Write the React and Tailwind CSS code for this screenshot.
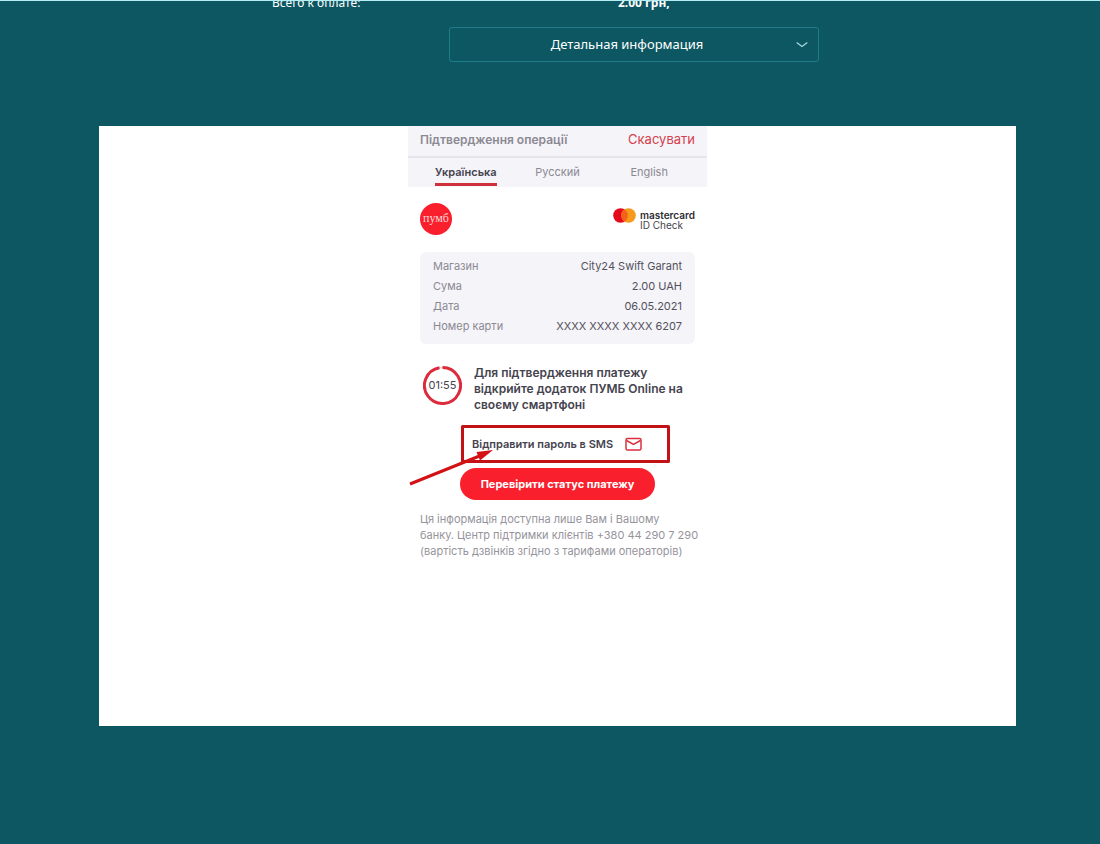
import { useState } from 'react'
import clsx from 'clsx'

const languages = [
  { id: 'uk', label: 'Українська' },
  { id: 'ru', label: 'Русский' },
  { id: 'en', label: 'English' },
]

const details = [
  { label: 'Магазин', value: 'City24 Swift Garant' },
  { label: 'Сума', value: '2.00 UAH' },
  { label: 'Дата', value: '06.05.2021' },
  { label: 'Номер карти', value: 'XXXX XXXX XXXX 6207' },
]

function OrderSummary() {
  return (
    <header className="mr-[281px] ml-[272px] overflow-hidden text-white">
      <div className="-mt-[7px] flex h-[18px] items-center justify-between text-xs leading-[18px]">
        <span className="whitespace-nowrap">Всего к оплате:</span>
        <strong className="w-[201px] whitespace-nowrap">2.00 грн,</strong>
      </div>
      <button
        type="button"
        className="mt-[15px] ml-auto flex h-[35px] w-[370px] items-center rounded-[3px] border border-[#1f7d8a] pr-[10px] pl-2 text-[13px]"
      >
        <span className="flex-1 text-center">Детальная информация</span>
        <svg className="h-3 w-3" viewBox="0 0 12 12" fill="none" stroke="#a9dbe2" strokeWidth="1.2">
          <path d="M0.7 3.500 6 7.500l5.300-4" />
        </svg>
      </button>
    </header>
  )
}

function LanguageTabs() {
  const [active, setActive] = useState('uk')

  return (
    <nav className="grid h-[29px] grid-cols-3 justify-items-center bg-[#f5f4f9] px-3 text-[11px]">
      {languages.map(({ id, label }) => (
        <button
          key={id}
          type="button"
          onClick={() => setActive(id)}
          className={clsx(
            'h-7 border-b-[3px] pt-[3px] leading-4 whitespace-nowrap',
            active === id ? 'border-[#d0303c] font-semibold text-[#45434e]' : 'border-transparent text-[#8b8992]',
          )}
        >
          {label}
        </button>
      ))}
    </nav>
  )
}

function BankLogo() {
  return (
    <svg className="h-8 w-8" viewBox="0 0 32 32" role="img" aria-label="ПУМБ">
      <circle cx="16" cy="16" r="16" fill="#fa1f2d" />
      <text x="16" y="19" textAnchor="middle" fontFamily="Liberation Serif, serif" fontSize="12" fill="#ffd6d6">
        пумб
      </text>
    </svg>
  )
}

function MastercardLogo() {
  return (
    <div className="flex gap-1">
      <svg className="h-[15px] w-[23px]" viewBox="0 0 23 15">
        <circle cx="7.5" cy="7.5" r="7.3" fill="#e5091c" />
        <circle cx="15.5" cy="7.5" r="7.3" fill="#f59b1c" />
        <path d="M11.5 1.4a7.3 7.3 0 0 1 0 12.2 7.3 7.3 0 0 1 0-12.2Z" fill="#f5601b" />
      </svg>
      <p className="pt-[2px] text-[10px] leading-[10px] text-[#45434e]">
        <span className="block font-semibold text-[#2e2d33]">mastercard</span>
        ID Check
      </p>
    </div>
  )
}

function Timer() {
  return (
    <div className="relative grid h-[41px] w-[39px] shrink-0 place-items-center text-[11px] text-[#45434e]">
      <svg className="absolute inset-0" viewBox="0 0 39 41" fill="none">
        <circle cx="19.5" cy="20.5" r="18" stroke="#f3c9cf" strokeWidth="1" />
        <path d="M19.500 2.500A18 18 0 1 1 16.500 2.750" stroke="#dc2b3c" strokeWidth="3" />
      </svg>
      01:55
    </div>
  )
}

function Highlight() {
  return (
    <svg
      className="pointer-events-none absolute -top-[6px] left-0 h-[72px] w-[264px]"
      viewBox="0 0 264 72"
      fill="none"
    >
      <rect x="54.5" y="7.5" width="206" height="35" stroke="#c21217" strokeWidth="3" strokeLinejoin="round" />
      <path d="M2 65 74 36" stroke="#d31216" strokeWidth="3" />
      <path d="M85 31 68.500 33 72 41.500Z" fill="#d31216" />
    </svg>
  )
}

function Confirmation() {
  return (
    <section className="mx-auto w-[299px] font-['Inter',sans-serif]">
      <div className="flex h-8 items-center justify-between border-b-2 border-[#e6e5ec] bg-[#f5f4f9] px-3 pb-[2px] text-[13px]">
        <h1 className="text-xs font-semibold whitespace-nowrap text-[#8b8992]">Підтвердження операції</h1>
        <a href="#cancel" className="text-[#d4404c]">Скасувати</a>
      </div>
      <LanguageTabs />

      <div className="px-3">
        <div className="flex items-start justify-between pt-4">
          <BankLogo />
          <div className="pt-[5px]">
            <MastercardLogo />
          </div>
        </div>

        <dl className="mt-[17px] rounded-md bg-[#f5f4f9] px-[13px] pt-1 pb-2 text-[11px] leading-5">
          {details.map(({ label, value }) => (
            <div key={label} className="flex justify-between">
              <dt className="text-[#8b8992]">{label}</dt>
              <dd className="text-[#53515b]">{value}</dd>
            </div>
          ))}
        </dl>

        <div className="mt-[21px] flex h-12 gap-3 pl-[3px]">
          <Timer />
          <p className="text-xs leading-4 font-semibold whitespace-nowrap text-[#45434e]">
            Для підтвердження платежу
            <br />
            відкрийте додаток ПУМБ Online на
            <br />
            своєму смартфоні
          </p>
        </div>
      </div>

      <div className="relative mt-3">
        <button
          type="button"
          className="ml-16 flex h-[38px] items-center gap-3 text-[11px] font-semibold whitespace-nowrap text-[#45434e]"
        >
          Відправити пароль в SMS
          <svg className="h-[14px] w-[17px]" viewBox="0 0 17 14" fill="none" stroke="#d92f3f" strokeWidth="1.5">
            <rect x="1" y="1.500" width="15" height="11.500" rx="1.500" />
            <path d="m1.500 3.500 7 4 7-4" />
          </svg>
        </button>
        <Highlight />
      </div>

      <button
        type="button"
        className="mt-[5px] ml-[52px] h-8 w-[195px] rounded-full bg-[#fa1f2d] text-[11px] font-bold whitespace-nowrap text-white"
      >
        Перевірити статус платежу
      </button>

      <p className="mt-[11px] pl-3 text-[11px] leading-4 whitespace-nowrap text-[#96949c]">
        Ця інформація доступна лише Вам і Вашому
        <br />
        банку. Центр підтримки клієнтів +380 44 290 7 290
        <br />
        (вартість дзвінків згідно з тарифами операторів)
      </p>
    </section>
  )
}

export default function App() {
  return (
    <div className="min-h-screen overflow-hidden border-t border-[#b3eef2] bg-[#0d5762] font-['Noto_Sans',sans-serif]">
      <OrderSummary />
      <main className="mt-16 mr-[84px] ml-[99px] min-h-[600px] bg-white">
        <Confirmation />
      </main>
    </div>
  )
}
